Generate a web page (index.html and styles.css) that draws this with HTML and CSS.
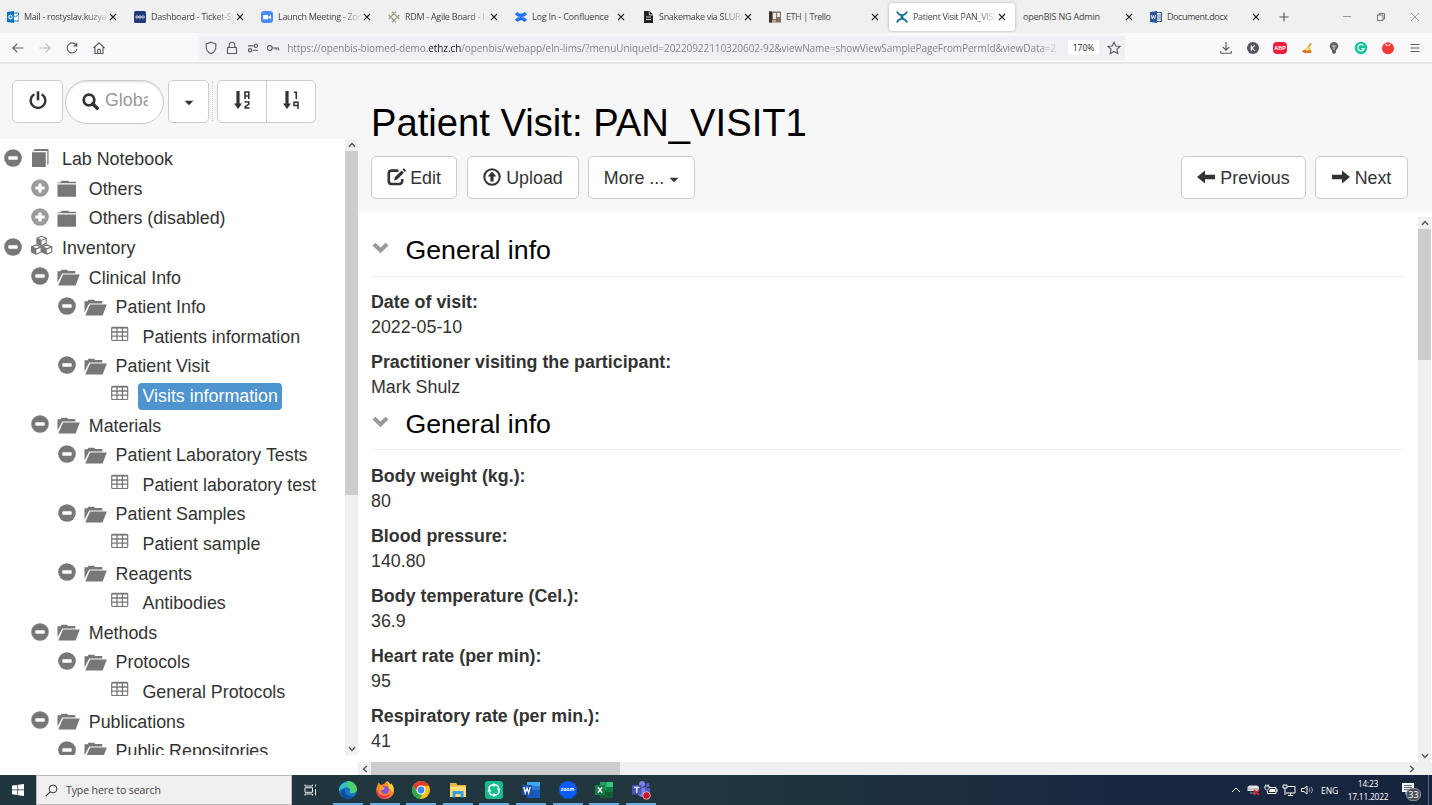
FILE: index.html
```html
<!DOCTYPE html>
<html lang="en">
<head>
<meta charset="utf-8">
<title>Patient Visit PAN_VISIT1</title>
<link rel="stylesheet" href="styles.css">
</head>
<body>
<svg class="defs" width="0" height="0">
  <symbol id="x" viewBox="0 0 8 8"><path d="M1 1l6 6M7 1L1 7" stroke="currentColor" stroke-width="1.1" fill="none"/></symbol>
  <symbol id="minus" viewBox="0 0 18 18"><circle cx="9" cy="9" r="8.8" fill="#777"/><rect x="4.3" y="7.2" width="9.4" height="3.6" rx=".7" fill="#fff"/></symbol>
  <symbol id="plus" viewBox="0 0 18 18"><circle cx="9" cy="9" r="8.8" fill="#9b9b9b"/><path d="M7.4 4.4h3.2v3h3v3.2h-3v3H7.4v-3h-3V7.400h3z" fill="#fff"/></symbol>
  <symbol id="folder" viewBox="0 0 24 18"><path d="M.5 2.400h3L4.600.700h6.500l1.200 1H19v1.500H.5zM.5 4.600H19V16.800H.5z" fill="#777"/></symbol>
  <symbol id="open" viewBox="0 0 24 18"><path d="M.5 2.300h3L4.500.800h5.700l.800 1.300h7.300v2.300H5.200L.5 13.500z" fill="#777"/><path d="M6 5.600H22.800L18.600 16.600H1.200z" fill="#777"/></symbol>
  <symbol id="book" viewBox="0 0 24 20"><path d="M4.600 1H18.500v15.500h-1.200V3H4.300L3 4z M2 4.300h13.800V19H2z" fill="#777"/></symbol>
  <symbol id="table" viewBox="0 0 18 16"><rect x=".7" y="1.300" width="16" height="13.200" rx="1" fill="none" stroke="#777" stroke-width="1.200"/><path d="M.7 1.800h16" stroke="#777" stroke-width="1.600"/><path d="M1 6h15.500M1 10.200h15.500M6 2v12.500M11.400 2v12.500" stroke="#777" stroke-width="1.300"/></symbol>
  <symbol id="cubes" viewBox="0 0 24 20"><g fill="#fff" stroke="#777" stroke-width="1.25" stroke-linejoin="round"><path d="M7 3.200l4.600-2 4.600 2v5.200l-4.600 2.200L7 8.400z"/><path d="M1.500 11.800l4.800-2 4.900 2v5.200l-4.900 2.200L1.500 17zM12 11.800l4.800-2 4.900 2V17l-4.900 2.200L12 17z"/><path d="M7 3.200l4.600 2 4.600-2M1.500 11.800l4.800 2 4.900-2M12 11.800l4.800 2 4.900-2" fill="none"/></g><path d="M7 3.400l4.600 2v5L7 8.400zM1.500 12l4.800 2v5l-4.800-2zM12 12l4.800 2v5L12 17z" fill="#777"/></symbol>
  <symbol id="caret" viewBox="0 0 10 6"><path d="M.6.8h8.8L5 5.300z" fill="#333"/></symbol>
  <symbol id="chev" viewBox="0 0 17 12"><path d="M.5 3.500L3.300.8l5.200 4.600L13.700.8l2.800 2.700-8 7.700z" fill="#999"/></symbol>
  <symbol id="sort" viewBox="0 0 8 18"><path d="M2.400 0h3.200v12.500H8L4 18 0 12.500h2.400z" fill="#333"/></symbol>
  <symbol id="arrowl" viewBox="0 0 18 14"><path d="M0 7l8-6.600v4.400h10v4.400H8v4.400z" fill="#333"/></symbol>
  <symbol id="up" viewBox="0 0 8 6"><path d="M1 4.800L4 1.600l3 3.200" fill="none" stroke="#555" stroke-width="1.500"/></symbol>
</svg>

<header class="tabs">
  <div class="tab"><svg class="fav" viewBox="0 0 12 12"><path d="M5 2h7v8H5z" fill="#fff" stroke="#1473c8"/><path d="M5 3l3.500 3L12 3" stroke="#1473c8" fill="none"/><path d="M0 1l7-1v12L0 11z" fill="#0a72c6"/><ellipse cx="3.500" cy="6" rx="1.600" ry="2" fill="none" stroke="#fff" stroke-width="1.200"/></svg><span class="name fade">Mail - rostyslav.kuzya</span><svg class="close"><use href="#x"/></svg></div>
  <div class="tab"><svg class="fav" viewBox="0 0 12 12"><rect width="12" height="12" rx="1.500" fill="#203b78"/><path d="M2 5h2.200v2H2zM5 5h2v2H5zM8 5h2.200v2H8z" stroke="#fff" stroke-width=".7" fill="none"/></svg><span class="name fade">Dashboard - Ticket-Sy</span><svg class="close"><use href="#x"/></svg></div>
  <div class="tab"><svg class="fav" viewBox="0 0 12 12"><rect width="12" height="12" rx="3" fill="#4a8cf7"/><rect x="2" y="4" width="5.300" height="4.200" rx="1" fill="#fff"/><path d="M7.800 5.400L10 4v4.200L7.800 6.800z" fill="#fff"/></svg><span class="name fade">Launch Meeting - Zoo</span><svg class="close"><use href="#x"/></svg></div>
  <div class="tab"><svg class="fav" viewBox="0 0 12 12"><g fill="none" stroke="#96a07c" stroke-width="1.100"><path d="M6 2.600L9.400 6 6 9.400 2.600 6z"/></g><path d="M6 2.600L4 .8M6 2.600L8 .8M6 9.400l-2 1.800M6 9.400l2 1.800M2.600 6L.8 4M2.600 6L.8 8M9.400 6l1.800-2M9.400 6l1.800 2" stroke="#96a07c" stroke-width="1.200"/></svg><span class="name fade">RDM - Agile Board - I</span><svg class="close"><use href="#x"/></svg></div>
  <div class="tab"><svg class="fav" viewBox="0 0 12 12"><path d="M1 2.200c2.800 3 7 3 10 0M1 9.800c2.800-3 7-3 10 0" fill="none" stroke="#2272f5" stroke-width="3.400"/></svg><span class="name">Log In - Confluence</span><svg class="close"><use href="#x"/></svg></div>
  <div class="tab"><svg class="fav" viewBox="0 0 12 12"><path d="M2 0h5.500L11 3.500V12H2z" fill="#222"/><path d="M4 6h5M4 8.500h5M7.300.5V4H11" stroke="#fff" stroke-width=".8" fill="none"/></svg><span class="name fade">Snakemake via SLURM</span><svg class="close"><use href="#x"/></svg></div>
  <div class="tab"><svg class="fav" viewBox="0 0 12 12"><rect y=".5" width="12" height="11" fill="#7c7368"/><path d="M0 .5h3v11H0z" fill="#3a332d"/><path d="M4 2h3v6H4zM8 2h3v4H8z" fill="#eee8dc"/><path d="M3 9h4v2H3z" fill="#c9a77e"/></svg><span class="name tight">ETH | Trello</span><svg class="close"><use href="#x"/></svg></div>
  <div class="tab active"><svg class="fav" viewBox="0 0 12 12"><path d="M1 .5c2 4.800 8 4.800 10 0M1 11.500c2-4.800 8-4.800 10 0" fill="none" stroke="#0f6f9e" stroke-width="1.900"/><path d="M4.600 4.500h2.800v3H4.600z" fill="#0f6f9e"/></svg><span class="name fade">Patient Visit PAN_VISI</span><svg class="close"><use href="#x"/></svg></div>
  <div class="tab"><span class="name">openBIS NG Admin</span><svg class="close"><use href="#x"/></svg></div>
  <div class="tab"><svg class="fav" viewBox="0 0 12 12"><path d="M6 1.500h5.500v9H6z" fill="#fff" stroke="#2b579a"/><path d="M7 4h4M7 6h4M7 8h4" stroke="#2b579a" stroke-width=".8"/><path d="M0 1l7-1v12L0 11z" fill="#2b579a"/><path d="M1.200 4l1 4 1.200-3.600L4.600 8l1-4" stroke="#fff" fill="none" stroke-width=".8"/></svg><span class="name tight">Document.docx</span><svg class="close"><use href="#x"/></svg></div>
  <svg class="newtab" viewBox="0 0 10 10"><path d="M5 .5v9M.5 5h9" stroke="#555" stroke-width="1.100"/></svg>
  <div class="winctl">
    <svg viewBox="0 0 10 10"><path d="M1 4.500h8" stroke="#999"/></svg>
    <svg viewBox="0 0 10 10"><path d="M1.500 3h5.500v5.500H1.500zM3 3V1.500h5.500V7H7" fill="none" stroke="#666" stroke-width=".9"/></svg>
    <svg viewBox="0 0 10 10"><path d="M1 1l8 8M9 1L1 9" stroke="#999" stroke-width=".9"/></svg>
  </div>
</header>

<nav class="toolbar">
  <div class="cells">
    <svg viewBox="0 0 14 14"><path d="M12.500 7H2M6.300 2.600L1.900 7l4.400 4.400" class="ln"/></svg>
    <svg viewBox="0 0 14 14" class="dim"><path d="M1.500 7H12M7.700 2.600L12.100 7l-4.400 4.400" class="ln"/></svg>
    <svg viewBox="0 0 14 14"><path d="M11.800 5.200A5 5 0 1 0 12 8" class="ln"/><path d="M12.400 1.200v4.400H8z" fill="#5b5b66"/></svg>
    <svg viewBox="0 0 14 14"><path d="M1.500 7L7 1.800 12.500 7M3 6v6.500h8V6M5.600 12.300V9.500a1.400 1.400 0 0 1 2.800 0v2.800" class="ln"/></svg>
  </div>
  <div class="url">
    <svg viewBox="0 0 14 14"><path d="M7 1.200l4.800 1.700v3.400c0 3-2 5.200-4.800 6.500-2.800-1.300-4.800-3.500-4.800-6.500V2.900z" class="ln"/></svg>
    <svg viewBox="0 0 14 14"><path d="M2.500 6.500h9v6h-9zM4.200 6.300V4a2.800 2.800 0 0 1 5.600 0v2.300" class="ln"/></svg>
    <svg viewBox="0 0 14 14"><path d="M2 4.800h5.500M6.500 9.200H12" class="ln"/><circle cx="9.800" cy="4.800" r="1.600" class="ln"/><circle cx="4" cy="9.200" r="1.600" class="ln"/></svg>
    <svg viewBox="0 0 14 14"><circle cx="3.800" cy="7" r="2.400" class="ln"/><path d="M6.200 7h6.300v2.400M10 7v2" class="ln"/></svg>
    <span class="addr">https://openbis-biomed-demo.<b>ethz.ch</b>/openbis/webapp/eln-lims/?menuUniqueId=20220922110320602-92&amp;viewName=showViewSamplePageFromPermId&amp;viewData=2</span>
    <span class="pct">170%</span>
    <svg viewBox="0 0 14 14" class="star"><path d="M7 1.200l1.800 3.800 4.100.5-3 2.800.8 4.100L7 10.400l-3.700 2 .8-4.100-3-2.800 4.100-.5z" class="ln"/></svg>
  </div>
  <div class="cells right">
    <svg viewBox="0 0 14 14"><path d="M7 1v8M3.800 6L7 9.200 10.200 6M1.800 10v2.200h10.400V10" class="ln"/></svg>
    <svg viewBox="0 0 14 14"><circle cx="7" cy="7" r="6" fill="#55555f"/><path d="M5.300 4.400v5.200M8.800 4.400L5.700 7l3.100 2.600" stroke="#fff" stroke-width="1.200" fill="none"/></svg>
    <span class="abp">ABP</span>
    <svg viewBox="0 0 14 14"><path d="M10.500 1.500L12 3 9.500 6.300l2.200 4.700H3L6 7.500z" fill="#dfa54a"/><path d="M1.500 10l4-1.500 6 1-.5 2.500H4z" fill="#d87826"/><path d="M5 8l3-2 2 2.500-3 1.500z" fill="#f4da71"/></svg>
    <svg viewBox="0 0 14 14"><circle cx="7" cy="5.300" r="4.200" fill="#666"/><path d="M5.200 8h3.600v3.800L7 13l-1.800-1.200z" fill="#555"/><path d="M5.300 5h3.400M7 5v4" stroke="#ddd"/></svg>
    <svg viewBox="0 0 14 14"><circle cx="7" cy="7" r="6.200" fill="#15c39a"/><path d="M9.500 4.700A3.200 3.200 0 1 0 10 7.700H7.500" stroke="#fff" stroke-width="1.200" fill="none"/></svg>
    <svg viewBox="0 0 14 14"><circle cx="7" cy="7.200" r="6" fill="#f33a35"/><path d="M4 2l3 2.200L9.800 2 9 5 7 4.500l-2 .8z" fill="#ffd9d5"/></svg>
    <svg viewBox="0 0 14 14"><path d="M2.500 3.500h9M2.500 7h9M2.500 10.500h9" class="ln"/></svg>
  </div>
</nav>

<div class="app">
  <aside class="side">
    <div class="sidebar-head">
      <span class="btn power"><svg viewBox="0 0 18 18"><path d="M5.400 3.200a7.300 7.300 0 1 0 7.200 0" fill="none" stroke="#333" stroke-width="2.400"/><path d="M9 .3v9" stroke="#333" stroke-width="2.600"/></svg></span>
      <span class="search"><svg viewBox="0 0 17 17"><circle cx="7" cy="7" r="5.300" fill="none" stroke="#333" stroke-width="2.800"/><path d="M10.700 10.700l4.500 4.500" stroke="#333" stroke-width="3.400" stroke-linecap="round"/></svg><span>Global</span></span>
      <span class="btn drop"><svg class="caret"><use href="#caret"/></svg></span>
      <span class="dots"></span>
      <span class="btn pair">
        <span><svg class="sort"><use href="#sort"/></svg><svg class="az" viewBox="0 0 6 18"><path d="M1 8V1h3.800v7M1 5h4M.5 11h4.300v2.200L1.200 15.800V17H5.600" fill="none" stroke="#333" stroke-width="1.600"/></svg></span>
        <span><svg class="sort"><use href="#sort"/></svg><svg class="az" viewBox="0 0 6 18"><path d="M1 1.300h2.300V8M5 18v-6.800H1v3.300h4" fill="none" stroke="#333" stroke-width="1.600"/></svg></span>
      </span>
    </div>
    <div class="treebox">
      <div class="tree">
        <div class="row"><svg class="exp"><use href="#minus"/></svg><svg class="ico tall"><use href="#book"/></svg><span>Lab Notebook</span></div>
        <div class="row l1"><svg class="exp"><use href="#plus"/></svg><svg class="ico"><use href="#folder"/></svg><span>Others</span></div>
        <div class="row l1"><svg class="exp"><use href="#plus"/></svg><svg class="ico"><use href="#folder"/></svg><span>Others (disabled)</span></div>
        <div class="row"><svg class="exp"><use href="#minus"/></svg><svg class="ico tall cubes"><use href="#cubes"/></svg><span>Inventory</span></div>
        <div class="row l1"><svg class="exp"><use href="#minus"/></svg><svg class="ico"><use href="#open"/></svg><span>Clinical Info</span></div>
        <div class="row l2"><svg class="exp"><use href="#minus"/></svg><svg class="ico"><use href="#open"/></svg><span>Patient Info</span></div>
        <div class="row leaf"><svg class="tbl"><use href="#table"/></svg><span>Patients information</span></div>
        <div class="row l2"><svg class="exp"><use href="#minus"/></svg><svg class="ico"><use href="#open"/></svg><span>Patient Visit</span></div>
        <div class="row leaf"><svg class="tbl"><use href="#table"/></svg><span class="sel">Visits information</span></div>
        <div class="row l1"><svg class="exp"><use href="#minus"/></svg><svg class="ico"><use href="#open"/></svg><span>Materials</span></div>
        <div class="row l2"><svg class="exp"><use href="#minus"/></svg><svg class="ico"><use href="#open"/></svg><span>Patient Laboratory Tests</span></div>
        <div class="row leaf"><svg class="tbl"><use href="#table"/></svg><span>Patient laboratory test</span></div>
        <div class="row l2"><svg class="exp"><use href="#minus"/></svg><svg class="ico"><use href="#open"/></svg><span>Patient Samples</span></div>
        <div class="row leaf"><svg class="tbl"><use href="#table"/></svg><span>Patient sample</span></div>
        <div class="row l2"><svg class="exp"><use href="#minus"/></svg><svg class="ico"><use href="#open"/></svg><span>Reagents</span></div>
        <div class="row leaf"><svg class="tbl"><use href="#table"/></svg><span>Antibodies</span></div>
        <div class="row l1"><svg class="exp"><use href="#minus"/></svg><svg class="ico"><use href="#open"/></svg><span>Methods</span></div>
        <div class="row l2"><svg class="exp"><use href="#minus"/></svg><svg class="ico"><use href="#open"/></svg><span>Protocols</span></div>
        <div class="row leaf"><svg class="tbl"><use href="#table"/></svg><span>General Protocols</span></div>
        <div class="row l1"><svg class="exp"><use href="#minus"/></svg><svg class="ico"><use href="#open"/></svg><span>Publications</span></div>
        <div class="row l2"><svg class="exp"><use href="#minus"/></svg><svg class="ico"><use href="#open"/></svg><span>Public Repositories</span></div>
      </div>
      <div class="vbar"><svg class="arr"><use href="#up"/></svg><i class="thumb tree-thumb"></i><svg class="arr down"><use href="#up"/></svg></div>
    </div>
  </aside>
  <main class="main">
    <div class="head">
      <h1>Patient Visit: PAN_VISIT1</h1>
      <div class="actions">
        <span class="btn edit"><svg viewBox="0 0 20 18"><path d="M11.500 2.600H4.600A2.800 2.800 0 0 0 1.800 5.400v7.800A2.800 2.800 0 0 0 4.600 16h7.800a2.800 2.800 0 0 0 2.800-2.800V11" fill="none" stroke="#333" stroke-width="2.600"/><path d="M7 12.400l1-3.300 6.600-6.600 2.300 2.300-6.600 6.600zM15.500 1.600L16.800.3l2.300 2.300-1.300 1.300z" fill="#333"/></svg>Edit</span>
        <span class="btn upload"><svg viewBox="0 0 18 18"><circle cx="9" cy="9" r="7.700" fill="none" stroke="#333" stroke-width="2"/><path d="M9 3.600l4.400 5h-2.800v5H7.400v-5H4.600z" fill="#333"/></svg>Upload</span>
        <span class="btn more">More ... <svg class="caret"><use href="#caret"/></svg></span>
        <span class="btn prev"><svg class="arrow"><use href="#arrowl"/></svg>Previous</span>
        <span class="btn next"><svg class="arrow flip"><use href="#arrowl"/></svg>Next</span>
      </div>
    </div>
    <div class="pane">
      <div class="scroll">
        <h2 class="first"><svg><use href="#chev"/></svg>General info</h2>
        <dl>
          <dt>Date of visit:</dt><dd>2022-05-10</dd>
          <dt>Practitioner visiting the participant:</dt><dd>Mark Shulz</dd>
        </dl>
        <h2><svg><use href="#chev"/></svg>General info</h2>
        <dl>
          <dt>Body weight (kg.):</dt><dd>80</dd>
          <dt>Blood pressure:</dt><dd>140.80</dd>
          <dt>Body temperature (Cel.):</dt><dd>36.9</dd>
          <dt>Heart rate (per min):</dt><dd>95</dd>
          <dt>Respiratory rate (per min.):</dt><dd>41</dd>
        </dl>
      </div>
      <div class="vbar main-bar"><svg class="arr"><use href="#up"/></svg><i class="thumb main-thumb"></i><svg class="arr down"><use href="#up"/></svg></div>
    </div>
    <div class="hbar"><svg class="arr left"><use href="#up"/></svg><i class="hthumb"></i><svg class="arr rgt"><use href="#up"/></svg></div>
  </main>
</div>

<footer class="taskbar">
  <div class="start"><svg viewBox="0 0 12 12"><path d="M0 1.600L5.400.9v4.700H0zM6.100.8L12 0v5.600H6.100zM0 6.300h5.400V11L0 10.300zM6.100 6.300H12V12l-5.900-.8z" fill="#fff"/></svg></div>
  <div class="find"><svg viewBox="0 0 13 13"><circle cx="8" cy="4.900" r="3.900" fill="none" stroke="#333"/><path d="M5.200 7.800L.8 12.200" stroke="#333" stroke-width="1.100"/></svg>Type here to search</div>
  <div class="view"><svg viewBox="0 0 13 12"><path d="M1 .5V2h7.500V.5M1 11.500V10h7.500v1.500M1 3.700h7.500v4.600H1zM11.500.5v2M11.500 5v6.500" fill="none" stroke="#fff" stroke-width=".9"/></svg></div>
  <div class="apps">
    <div class="on"><svg viewBox="0 0 20 20"><circle cx="10" cy="10" r="9" fill="#1476cd"/><path d="M1.200 8.500C3 1 15-1 18.600 8c1 4-3 6-7 4.500 2-2 .5-5-2.600-5C5 7.500 2 9 1.200 12z" fill="#35c1c1"/><path d="M9 1.100c6-.5 10 4 10 8.500 0 3-4 4.500-7.500 2.900 2-2 0-4.500-1-5z" fill="#4fd06d"/><path d="M7.500 9c-2 4 2 8.500 8.800 7.300C11 21 3 18 3 12.500 3 10 5 8.500 7.500 9z" fill="#104f9d"/></svg></div>
    <div class="on"><svg viewBox="0 0 20 20"><path d="M2.500 5l1-2.500L6 5l3-1 3-3c2 1 3 3 3 4l1.500-1.500C20 9 20 13 16.500 16.500 12 20.500 5 19.500 2.500 15 .8 12 1 8 2.500 5z" fill="#ff8a23"/><path d="M12 1c2 1 3 3 3 4l1.500-1.500C19 7 19 9 18 12l-4-4z" fill="#ffd43b"/><path d="M2 9c1 7 9 9 14 4-2 6-9 7-12.500 3C2 14 1.500 12 2 9z" fill="#f52a5d"/><circle cx="10" cy="10" r="3.900" fill="#8751d9"/><path d="M5 7l5 .6-2 2.400-3-.2z" fill="#ffad32"/></svg></div>
    <div class="on"><svg viewBox="0 0 20 20"><circle cx="10" cy="10" r="9" fill="#fbc116"/><path d="M2.200 5.500A9 9 0 0 1 17.900 5.700H10L6 12z" fill="#e33b2e"/><path d="M2.200 5.500L6.200 12.200 11 14.500 8.900 19A9 9 0 0 1 2.200 5.500z" fill="#2da94f"/><circle cx="10" cy="10" r="4.500" fill="#fff"/><circle cx="10" cy="10" r="3.400" fill="#4285f4"/></svg></div>
    <div class="on"><svg viewBox="0 0 20 20"><path d="M2 3h6l1.500 2H18v12H2z" fill="#e9b43d"/><path d="M2 6.500h16V17H2z" fill="#fddc75"/><path d="M4.500 11h11v6.500h-3V14h-5v3.500h-3z" fill="#3a9de0"/></svg></div>
    <div class="on"><svg viewBox="0 0 20 20"><rect x="1" y="1" width="18" height="18" rx="3" fill="#12bb8b"/><path d="M8 5h3.500a3 3 0 0 1 3 3M15 8.500V11a4 4 0 0 1-3.500 4M12 15H8.500a3 3 0 0 1-3-3M5 11.500V9a4 4 0 0 1 3.500-4" fill="none" stroke="#fff" stroke-width="1.400"/><path d="M10.500 3l-3 2 3 2zM9.500 13l3 2-3 2zM3.400 11.500h4L5.400 8.800zM12.600 8.500h4l-2 2.700z" fill="#fff"/></svg></div>
    <div class="on"><svg viewBox="0 0 20 20"><path d="M6 2h13v16H6z" fill="#185abd"/><path d="M6 2h13v4H6z" fill="#41a5ee"/><path d="M6 6h13v4H6z" fill="#2b7cd3"/><rect x="1" y="5" width="10" height="10" fill="#1a4fa3"/><path d="M2.800 7l1.500 6L6 8l1.700 5 1.500-6" stroke="#fff" fill="none" stroke-width="1.300"/></svg></div>
    <div class="on"><span class="zoom">zoom</span></div>
    <div class="on"><svg viewBox="0 0 20 20"><path d="M6 2h13v16H6z" fill="#185c37"/><path d="M6 2h6.500v8H6z" fill="#21a366"/><path d="M12.500 2H19v5h-6.500z" fill="#33c481"/><path d="M12.500 7H19v5h-6.500z" fill="#107c41"/><rect x="1" y="5" width="10" height="10" fill="#107c41"/><path d="M3.800 7.200l4.400 5.600M8.200 7.200l-4.400 5.600" stroke="#fff" stroke-width="1.500"/></svg></div>
    <div class="on"><svg viewBox="0 0 20 20"><circle cx="11" cy="4" r="3" fill="#7b83eb"/><circle cx="16.500" cy="5" r="2.200" fill="#5059c9"/><path d="M7 7.500h9v6a5 5 0 0 1-9 1z" fill="#7b83eb"/><path d="M14 8h5v5a3 3 0 0 1-5 1.500z" fill="#5059c9"/><rect x="1" y="5" width="9.500" height="9.500" fill="#4b53bc"/><path d="M3 7.300h5.500M5.750 7.300V13" stroke="#fff" stroke-width="1.300"/><circle cx="15.500" cy="15.500" r="3.800" fill="#c4112f" stroke="#f3d6da" stroke-width=".8"/></svg></div>
  </div>
  <div class="tray">
    <svg viewBox="0 0 14 14"><path d="M3 9l4-4 4 4" class="wl"/></svg>
    <svg viewBox="0 0 14 14"><path d="M1.500 4l2-1.500h7.500L13 4v4H1.500z" fill="#e3e3e3"/><path d="M1.500 6h11.500M4 10h5" stroke="#999"/><path d="M8 7l5 5M13 7l-5 5" stroke="#e32028" stroke-width="1.700"/></svg>
    <svg viewBox="0 0 14 14"><path d="M5 4.500H12v6H3.500V8M1 3h4v2.500L3 7.500 1 5.500zM1.800 1.500V3M4.200 1.500V3M13 6v3" class="wl"/><path d="M6 6h5v3H5z" fill="#fff"/></svg>
    <svg viewBox="0 0 14 14"><path d="M5.500 3.500H13v6.500H4M8.500 10v2.500M6 12.500h5M1 2h4v3H1zM3 5v7" class="wl"/></svg>
    <svg viewBox="0 0 14 14"><path d="M1.500 5.500H4L7 3v8L4 8.500H1.500z" class="wl"/><path d="M9 5c1 1.200 1 2.800 0 4M11 3.800c1.800 2 1.800 4.400 0 6.400" class="wl soft"/></svg>
    <span class="lang">ENG</span>
    <span class="clock"><span>14:23</span><span>17.11.2022</span></span>
    <span class="note"><svg viewBox="0 0 14 13"><path d="M0 0h12v9H6l-2.500 2.500V9H0z" fill="#f2f4f7"/><path d="M2 2.500h8M2 4.500h8M2 6.500h5" stroke="#3a4358" stroke-width=".8"/></svg><b>33</b></span>
    <span class="edge"></span>
  </div>
</footer>
</body>
</html>
```
FILE: styles.css
```css
* { box-sizing: border-box; }
body {
  margin: 0;
  width: 1432px;
  height: 805px;
  overflow: hidden;
  display: flex;
  flex-direction: column;
  font-family: "Liberation Sans", Arial, sans-serif;
  font-size: 17.84px;
  color: #333;
  background: #fff;
}
svg { display: block; flex: none; }
.defs { position: absolute; }

/* browser tabs */
.tabs {
  flex: none;
  height: 33px;
  display: flex;
  align-items: center;
  background: #f0f0f0;
  font: 9px "Open Sans", "Noto Sans", sans-serif;
  color: #444;
}
.tab {
  width: 127px;
  height: 28px;
  padding: 0 10px 0 7px;
  display: flex;
  align-items: center;
  border-radius: 3px;
}
.tab.active { background: #fff; box-shadow: 0 0 3px #aaa; width: 126px; margin-right: 1px; padding-right: 9px; }
.fav { width: 12px; height: 12px; margin-right: 5px; }
.name { flex: 1; min-width: 0; overflow: hidden; white-space: nowrap; letter-spacing: -.2px; }
.tight { letter-spacing: -.45px; }
.fade { letter-spacing: -.3px; -webkit-mask-image: linear-gradient(90deg, #000 75%, transparent); mask-image: linear-gradient(90deg, #000 75%, transparent); }
.close { width: 8px; height: 8px; color: #222; }
.newtab { width: 10px; height: 10px; margin-left: 9px; }
.winctl { margin-left: auto; display: flex; gap: 24px; padding-right: 12px; }
.winctl svg { width: 10px; height: 10px; }

/* navigation toolbar */
.toolbar {
  flex: none;
  height: 31px;
  display: flex;
  align-items: center;
  background: #f9f9fb;
  border-bottom: 2px solid #e6e6e8;
}
.ln { fill: none; stroke: #5b5b66; stroke-width: 1.15; }
.dim { opacity: .4; }
.cells { display: flex; align-items: center; gap: 13px; padding-left: 11px; width: 199px; }
.cells svg { width: 14px; height: 14px; }
.cells.right { margin-left: auto; padding: 0 11px 0 0; width: auto; }
.abp { width: 14px; height: 12px; border-radius: 4px; background: #ef1c3d; color: #fff; font: bold 5.5px/12px "Liberation Sans", sans-serif; text-align: center; }
.cells.right { padding-right: 10px; }
.url {
  width: 926px;
  height: 24px;
  padding: 0 5px;
  display: flex;
  align-items: center;
  background: #f0f0f4;
  border-radius: 3px;
  font: 10px "Open Sans", "Noto Sans", sans-serif;
  color: #84848c;
}
.url svg { width: 14px; height: 14px; margin-right: 6.8px; }
.addr {
  flex: 1;
  min-width: 0;
  overflow: hidden;
  white-space: nowrap;
  letter-spacing: -.075px;
  -webkit-mask-image: linear-gradient(90deg, #000 97%, transparent);
  mask-image: linear-gradient(90deg, #000 97%, transparent);
}
.addr b { font-weight: 400; color: #15141a; }
.pct { width: 31px; height: 15px; margin: 0 8px 0 6px; background: #fff; border-radius: 2px; font-size: 8.5px; line-height: 15px; text-align: center; color: #222; }
.url .star { margin-right: -1px; }

/* application */
.app { flex: none; height: 711px; display: flex; }
.side { width: 358px; }
.sidebar-head {
  height: 75px;
  padding: 16px 0 0 12px;
  display: flex;
  align-items: flex-start;
  background: #f7f7f7;
}
.btn {
  height: 43px;
  display: flex;
  align-items: center;
  justify-content: center;
  background: #fff;
  border: 1px solid #ccc;
  border-radius: 5px;
  white-space: pre;
}
.power { width: 51px; margin-right: 2px; }
.power svg { width: 18px; height: 18px; margin-top: -3px; }
.search {
  width: 99px;
  height: 44px;
  padding: 0 15px;
  display: flex;
  align-items: center;
  border: 1px solid #ccc;
  border-radius: 22px;
  background: #fff;
  box-shadow: inset 0 1px 2px #ddd;
  color: #999;
}
.search svg { width: 17px; height: 17px; margin: -2px 6px 0 1px; }
.search span { overflow: hidden; width: 44px; line-height: 24px; margin-top: -4px; }
.drop { width: 41px; margin-left: 4px; }
.caret { width: 10px; height: 6px; margin-top: 3px; }
.dots { width: 1px; height: 40px; margin: 1px 4px 0 3px; border-left: 1px dotted #ccc; }
.pair { width: 99px; }
.pair > span { flex: 1; height: 41px; display: flex; justify-content: center; align-items: flex-start; padding-top: 10px; gap: 2px; }
.pair > span + span { border-left: 1px solid #ccc; }
.sort { width: 8px; height: 18px; }
.az { width: 6px; height: 18px; }

.treebox { height: 616px; display: flex; }
.tree { flex: 1; padding-top: 5.8px; overflow: hidden; }
.row { height: 29.6px; padding-left: 4px; display: flex; align-items: center; white-space: nowrap; }
.row.l1 { padding-left: 30.8px; }
.row.l2 { padding-left: 57.6px; }
.row.leaf { padding-left: 110.6px; }
.row span { padding: 0 4.5px; line-height: 26.6px; border-radius: 4px; }
.row .sel { background: #4e94ce; color: #fff; }
.exp { width: 18px; height: 18px; margin: -3.2px 8px 0 0; }
.ico { width: 24px; height: 18px; margin: 0 3.5px 0 0; }
.ico.tall { height: 20px; margin-top: -3.2px; }
.ico.cubes { margin-top: -6px; }
.tbl { width: 18px; height: 16px; margin: -7px 9.4px 0 0; }
.vbar { width: 13px; display: flex; flex-direction: column; background: #f0f0f0; }
.thumb { width: 13px; background: #cdcdcd; }
.tree-thumb { height: 344px; }
.arr { width: 8px; height: 6px; margin: 3px 2.5px; }
.vbar .down { transform: rotate(180deg); margin-top: auto; }

.main { flex: 1; display: flex; flex-direction: column; }
.head { height: 148px; padding: 37px 24px 0 13px; background: #f7f7f7; }
h1 { margin: 0; font-size: 38.2px; line-height: 44px; font-weight: 400; color: #000; white-space: nowrap; }
.actions { display: flex; margin-top: 11px; }
.actions .btn { padding-top: 1.5px; }
.actions .btn svg { margin-right: 5px; }
.edit { width: 86px; margin-right: 10px; }
.edit svg { width: 20px; height: 18px; margin-top: -3px; }
.actions .edit svg { margin-right: 3px; }
.upload { width: 112px; margin-right: 9px; }
.upload svg { width: 18px; height: 18px; margin-top: -3px; }
.more { width: 107px; }
.actions .more svg { margin-right: 0; }
.prev { width: 125px; margin-left: auto; margin-right: 9px; }
.next { width: 93px; }
.arrow { width: 18px; height: 14px; margin-top: -2px; }
.flip { transform: scaleX(-1); }

.pane { height: 550px; display: flex; }
.scroll { flex: 1; padding: 0 13px; overflow: hidden; }
h2 {
  margin: 0 0 13.6px;
  height: 49.2px;
  padding-top: 8px;
  display: flex;
  align-items: flex-start;
  border-bottom: 1px solid #eee;
  font-size: 26.7px;
  line-height: 30px;
  font-weight: 400;
  color: #000;
}
h2.first { height: 65px; padding-top: 23px; margin-bottom: 13.1px; }
h2 svg { width: 17px; height: 12px; margin: 7px 16.5px 0 1px; }
dl { margin: 0; line-height: 25.36px; }
dt { font-weight: 700; }
dd { margin: 0 0 9.3px; }
dd:last-child { margin-bottom: 0; }
.main-bar { height: 545px; margin: 5px 1px 0 0; }
.main-thumb { height: 131px; }
.hbar { height: 13px; display: flex; align-items: center; background: #f0f0f0; padding-right: 14px; }
.hthumb { width: 249px; height: 13px; background: #cdcdcd; }
.left { transform: rotate(-90deg); }
.rgt { transform: rotate(90deg); margin-left: auto; }

/* taskbar */
.taskbar {
  flex: none;
  height: 30px;
  display: flex;
  background: linear-gradient(90deg, #20363f, #21363f 50%, #182740 78%, #17243e);
  font-family: "Open Sans", "Noto Sans", sans-serif;
  color: #fff;
}
.start { width: 36px; display: flex; align-items: center; justify-content: center; }
.start svg { width: 12px; height: 12px; }
.find {
  width: 256px;
  display: flex;
  align-items: center;
  gap: 8px;
  padding-left: 8px;
  background: #f0f0f0;
  border: 1px solid #bbb;
  color: #444;
  font-size: 10.5px;
  letter-spacing: -.1px;
}
.find svg { width: 13px; height: 13px; }
.view { width: 37px; display: flex; align-items: center; justify-content: center; }
.view svg { width: 13px; height: 12px; }
.apps { display: flex; gap: 6.6px; padding-left: 4px; }
.on { width: 30px; height: 30px; display: flex; align-items: center; justify-content: center; border-bottom: 2px solid #6aaee0; }
.on svg { width: 20px; height: 20px; margin-top: 2px; }
.zoom { width: 18px; height: 18px; margin-top: 2px; border-radius: 50%; background: #0b5cff; font: bold 5px/17px "Open Sans", sans-serif; text-align: center; }
.tray { margin-left: auto; display: flex; align-items: center; }
.tray > svg { width: 14px; height: 14px; margin-right: 4px; }
.tray > svg:first-child { margin-right: 3px; }
.wl { fill: none; stroke: #fff; stroke-width: 1; }
.soft { opacity: .6; }
.lang { font-size: 8.5px; width: 19px; margin-left: 3px; }
.clock { width: 50px; margin-left: 3px; display: flex; flex-direction: column; align-items: center; font-size: 8.4px; line-height: 13.5px; letter-spacing: -.2px; }
.note { position: relative; width: 22px; height: 18px; margin: 3px 4px 0 9px; }
.note svg { width: 14px; height: 13px; }
.note b { position: absolute; left: 4px; top: 5px; width: 15px; height: 13px; border-radius: 6px; background: #4b5059; border: 1px solid #8b8f96; font: 9px/11px "Open Sans", sans-serif; text-align: center; }
.edge { width: 1px; height: 30px; margin-right: 3px; background: #5b6579; }
```
